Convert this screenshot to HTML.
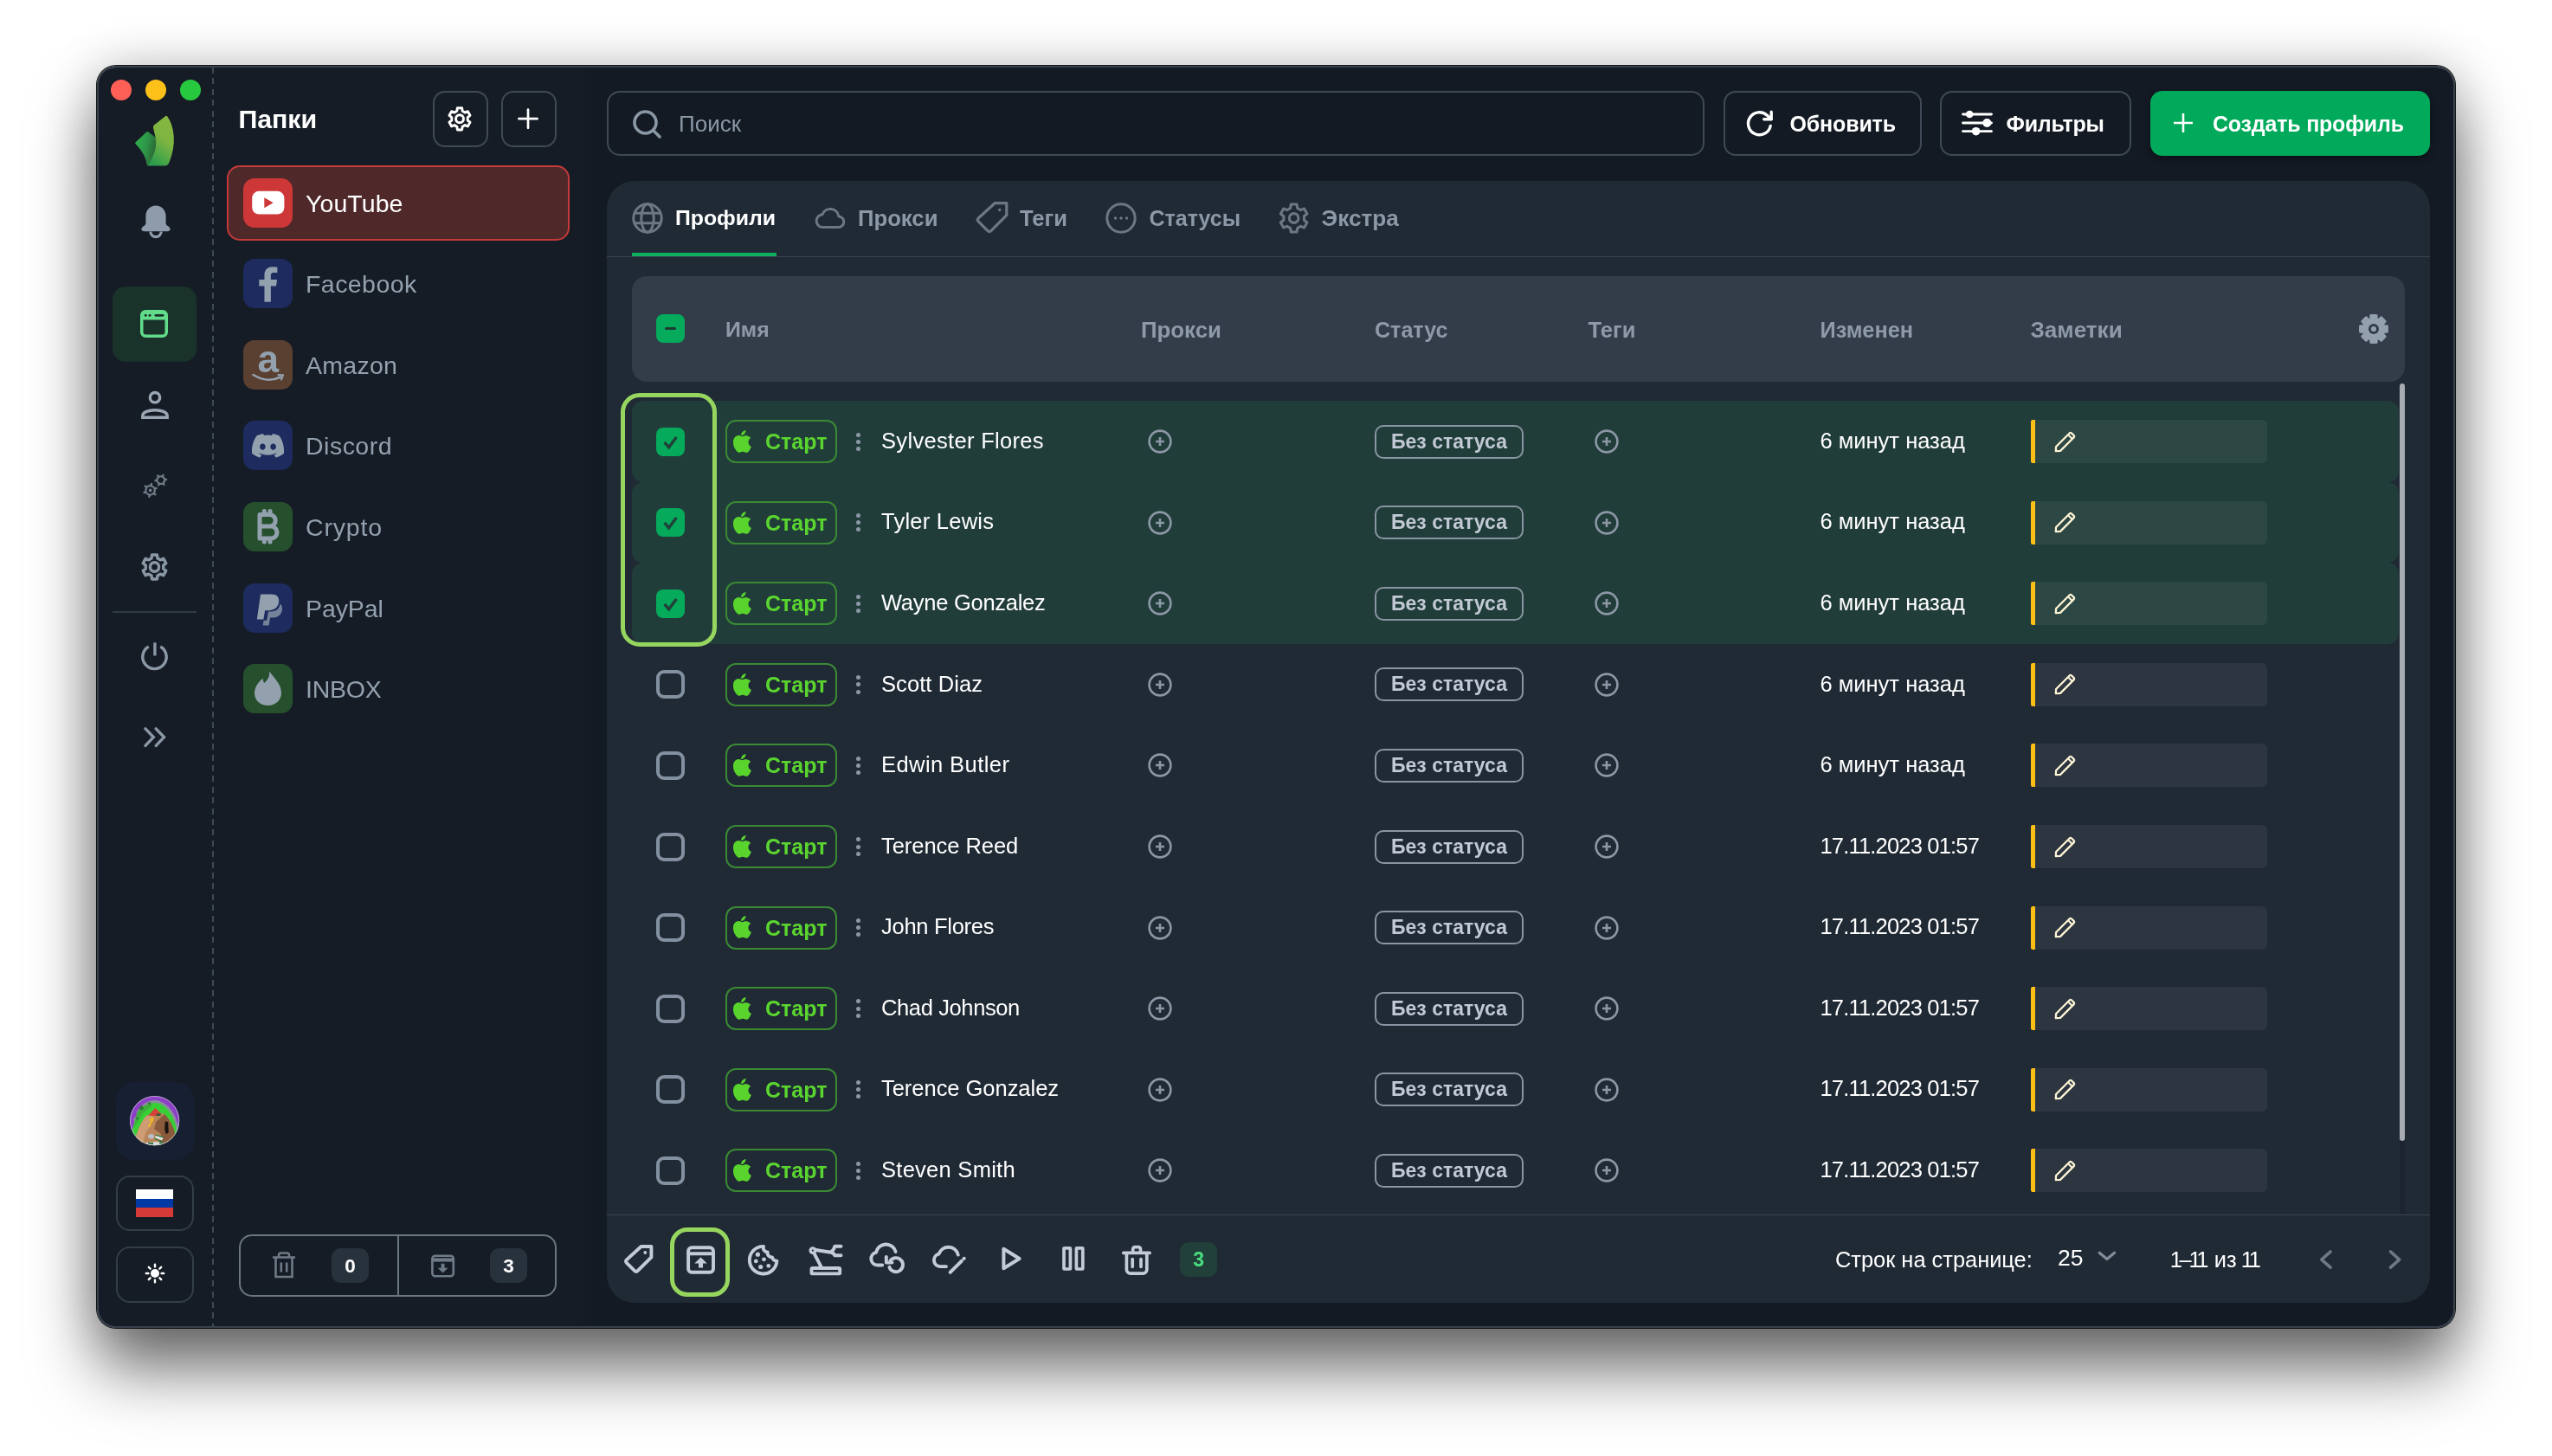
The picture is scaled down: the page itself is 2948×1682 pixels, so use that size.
<!DOCTYPE html>
<html lang="ru"><head><meta charset="utf-8"><title>Профили</title><style>
*{box-sizing:border-box;margin:0;padding:0}
html,body{width:2948px;height:1682px;background:#fff;overflow:hidden}
body{position:relative;font-family:"Liberation Sans",sans-serif;color:#fff;-webkit-font-smoothing:antialiased}
.win{position:absolute;left:112px;top:76px;width:2724px;height:1458px;border-radius:22px;background:linear-gradient(90deg,#161c26 0,#161c26 556px,#131a23 572px);overflow:hidden;
 box-shadow:0 0 0 1px rgba(0,0,0,.9),0 48px 76px rgba(0,0,0,.56),0 0 60px rgba(0,0,0,.2)}
.win:after{content:"";position:absolute;inset:0;border-radius:22px;box-shadow:inset 0 0 0 2px #37414d,inset 0 2px 0 0 #55616e;pointer-events:none;z-index:50}
.pg{will-change:transform;position:absolute;left:-112px;top:-76px;width:2948px;height:1682px}
.a{position:absolute}
.c{display:flex;align-items:center;justify-content:center}
svg{display:block;overflow:visible}
.tl{width:24px;height:24px;border-radius:50%;top:92px}
.dash{left:245px;top:76px;width:0;height:1458px;border-left:2px dashed #3d4754}
.navact{left:130px;top:331px;width:97px;height:87px;border-radius:15px;background:#19332b}
.sbbtn{left:134px;width:90px;border-radius:16px;border:2px solid #333d49}
.title{left:275.500px;top:119.300px;font-size:30.400px;font-weight:700;line-height:36px;letter-spacing:-.1px}
.sq{width:64.200px;height:64.500px;top:105.300px;border-radius:14px;border:2px solid #3f4955}
.fold{left:262.500px;width:395.500px;height:86px;border-radius:15px}
.fold .ic{position:absolute;left:18px;top:14px;width:57px;height:57px;border-radius:13px}
.fold .nm{position:absolute;left:90.500px;top:.2px;height:86px;line-height:86px;font-size:28.500px;color:#93a0ae}
.fold.act{background:#4f282a;border:2px solid #c43a3a;left:262px;width:396.300px;height:87px;margin-top:-.5px}
.fold.act .nm{color:#fff;left:89px;top:-1.300px}
.fold.act .ic{left:16.500px;top:12.500px}
.cnt{left:276px;top:1426px;width:367px;height:72px;border-radius:15px;border:2px solid #6a7682}
.cbadge{width:43px;height:40px;border-radius:11px;background:#28323d;top:1442px;font-weight:700;font-size:22.500px;padding-top:1px;color:#fff}
.search{left:701px;top:104.500px;width:1268px;height:75px;border-radius:15px;border:2px solid #3f4955}
.btn{top:105px;height:74.500px;border-radius:14px;border:2px solid #3f4955;font-weight:700;font-size:25px}
.panel{left:701px;top:209px;width:2106px;height:1296px;border-radius:32px;background:#202a35}
.tab{top:232px;height:40px;line-height:40px;font-weight:700;font-size:25.4px;color:#8b98a6}
.thead{left:730px;top:319px;width:2048px;height:122px;border-radius:17px;background:#323d49}
.th{top:361.300px;height:40px;line-height:40px;font-weight:700;font-size:24.6px;color:#8e9aa8}
.row{left:730px;width:2041px;height:93.570px;border-radius:13px}
.row.sel{background:#213d3a}
.cb{width:33px;height:33px;border-radius:8px}
.cb.on{background:#05aa5b}
.cb.off{border:4px solid #8290a0;border-radius:9px}
.start{width:129px;height:50px;border-radius:12px;border:2px solid #3a8a34;color:#5ad52f;font-weight:700;font-size:25px}
.nm2{font-size:26px;color:#fff;height:40px;line-height:40px;white-space:nowrap}
.st{width:172px;height:39px;border-radius:10px;border:2px solid #8995a2;color:#c0c9d4;font-weight:700;font-size:23px;line-height:35px;text-align:center}
.note{width:273px;height:50px;background:rgba(255,255,255,.055);border-left:5.300px solid #fbbf16;border-radius:2px 6px 6px 2px}
.bbar{left:701px;top:1402.500px;width:2106px;height:1.800px;background:#3a4551}
.ft{font-size:25.4px;color:#fff;height:40px;line-height:40px;white-space:nowrap}
.hl{border:5px solid #96d65f;border-radius:22px}
</style></head>
<body>
<div class="win"><div class="pg">
<div class="a tl" style="left:128px;background:#fe5f57"></div>
<div class="a tl" style="left:168px;background:#fec119"></div>
<div class="a tl" style="left:208px;background:#27c93f"></div>
<svg class="a" style="left:150px;top:128px" width="60" height="70" viewBox="150 128 60 70" ><defs><linearGradient id="lg1" x1=".75" y1="0" x2=".3" y2="1"><stop offset="0" stop-color="#88b840"/><stop offset=".45" stop-color="#7db442"/><stop offset=".75" stop-color="#4fa848"/><stop offset="1" stop-color="#2a9a4c"/></linearGradient>
<linearGradient id="lg2" x1="0" y1=".3" x2="1" y2=".6"><stop offset="0" stop-color="#2fb04e"/><stop offset=".5" stop-color="#2e9448"/><stop offset="1" stop-color="#2a5a2f"/></linearGradient></defs>
<path d="M169.200 152.600Q170.200 151.600 171.400 152.500L182 160.500 181 176 170 191.600Q168.500 178 156.600 166.200 155.700 165.200 156.700 164.200Z" fill="url(#lg2)"/>
<path d="M191 134.200Q192.300 133.200 193.300 134.600 199.500 143 200.700 157 201.800 172 195.500 187.500 193.800 191.600 190.500 191.600L170.200 191.600Q176.500 182 179 173.900 181.600 164 178.500 153.900L177 147.500Q176.500 145.600 178 144.400Z" fill="url(#lg1)"/></svg>
<svg class="a" style="left:162px;top:236px" width="36" height="40" viewBox="0 0 36 40" ><path d="M18 1.5c-6.6 0-11.6 5.2-11.6 11.8v8.2c0 1.6-.7 2.6-2 3.4C2.6 26 1.4 27 1.4 28.6c0 1.7 1.4 2.7 3.2 2.7h26.8c1.8 0 3.2-1 3.2-2.7 0-1.600-1.2-2.6-3-3.700-1.300-.8-2-1.800-2-3.400v-8.200C29.600 6.700 24.600 1.500 18 1.500Z" fill="#8e9baa"/><path d="M11.800 31.5a6.200 6.200 0 0 0 12.400 0" fill="none" stroke="#8e9baa" stroke-width="3.200"/></svg>
<div class="a navact"></div>
<svg class="a" style="left:162px;top:358px" width="32" height="32" viewBox="0 0 32 32" ><rect x="1.75" y="1.75" width="28.5" height="28.5" rx="4.500" fill="none" stroke="#62dc8a" stroke-width="3.500"/><path d="M2 6a4 4 0 0 1 4-4h20a4 4 0 0 1 4 4v5.500H2Z" fill="#62dc8a"/><circle cx="6.300" cy="6.300" r="1.500" fill="#19332b"/><circle cx="11" cy="6.300" r="1.500" fill="#19332b"/><rect x="16.500" y="4.900" width="11" height="2.800" rx="1.400" fill="#19332b"/></svg>
<svg class="a" style="left:162px;top:451px" width="34" height="34" viewBox="0 0 34 34" ><circle cx="17" cy="8.200" r="5.700" fill="none" stroke="#9aa6b3" stroke-width="3.400"/><path d="M2.800 31.300v-2c0-4.300 7-6.500 14.200-6.500s14.200 2.200 14.200 6.500v2Z" fill="none" stroke="#9aa6b3" stroke-width="3.400" stroke-linejoin="miter"/></svg>
<svg class="a" style="left:160px;top:544px" width="40" height="40" viewBox="160 544 40 40" ><g fill="none" stroke="#717c89" stroke-width="2.300"><g transform="translate(173.600 566.400) rotate(10)"><circle r="5.2"/><path d="M0 -5.2V-8.5" transform="rotate(0)"/><path d="M0 -5.2V-8.5" transform="rotate(60)"/><path d="M0 -5.2V-8.5" transform="rotate(120)"/><path d="M0 -5.2V-8.5" transform="rotate(180)"/><path d="M0 -5.2V-8.5" transform="rotate(240)"/><path d="M0 -5.2V-8.5" transform="rotate(300)"/><circle r=".8" fill="#717c89"/></g><g transform="translate(185.800 554.600) rotate(25)"><circle r="4.3"/><path d="M0 -4.3V-7.3" transform="rotate(0)"/><path d="M0 -4.3V-7.3" transform="rotate(60)"/><path d="M0 -4.3V-7.3" transform="rotate(120)"/><path d="M0 -4.3V-7.3" transform="rotate(180)"/><path d="M0 -4.3V-7.3" transform="rotate(240)"/><path d="M0 -4.3V-7.3" transform="rotate(300)"/></g></g></svg>
<svg class="a" style="left:163.4px;top:638.8px" width="31" height="32" viewBox="0 0 100 100" preserveAspectRatio="none"><path d="M38.65 18.48 L40.64 5.98 L59.36 5.98 L61.35 18.48 L71.62 24.41 L83.44 19.89 L92.80 36.09 L82.97 44.07 L82.97 55.93 L92.80 63.91 L83.44 80.11 L71.62 75.59 L61.35 81.52 L59.36 94.02 L40.64 94.02 L38.65 81.52 L28.38 75.59 L16.56 80.11 L7.20 63.91 L17.03 55.93 L17.03 44.07 L7.20 36.09 L16.56 19.89 L28.38 24.41Z" fill="none" stroke="#8a97a5" stroke-width="11" stroke-linejoin="round"/><circle cx="50" cy="50" r="16.5" fill="none" stroke="#8a97a5" stroke-width="11"/></svg>
<div class="a" style="left:130px;top:706px;width:97px;height:2px;background:#2f3a46"></div>
<svg class="a" style="left:162px;top:741px" width="33" height="34" viewBox="0 0 33 34" ><path d="M9.700 6a13.700 13.700 0 1 0 13.600 0" fill="none" stroke="#8a97a5" stroke-width="3.400" stroke-linecap="butt"/><path d="M16.900 1.300v15.200" stroke="#8a97a5" stroke-width="3.400"/></svg>
<svg class="a" style="left:164px;top:838px" width="28" height="28" viewBox="164 838 28 28" ><path d="M168 841.800L177.300 851.600 168 861.400M180.200 841.800L189.500 851.600 180.200 861.400" fill="none" stroke="#8a97a5" stroke-width="3.400" stroke-linejoin="miter" stroke-linecap="round"/></svg>
<div class="a" style="left:134px;top:1249.800px;width:90px;height:90.300px;border-radius:21px;background:#172033"></div>
<svg class="a" style="left:149.8px;top:1266px" width="57.3" height="57.3" viewBox="0 0 57 57" ><defs><clipPath id="avc"><circle cx="28.500" cy="28.500" r="28.500"/></clipPath></defs>
<g clip-path="url(#avc)"><rect width="57" height="57" fill="#8d3fc6"/>
<ellipse cx="28.400" cy="50" rx="29" ry="45" fill="#8a909b"/>
<path d="M0 18l7-3 1 8-4 3 2 6-4 8-2 1Z" fill="#8d3fc6"/>
<ellipse cx="28.400" cy="50" rx="26.300" ry="42" fill="#37cf36"/>
<path d="M8 20Q14 10 26 8.500L24 13 15 20 9 30 5 36Z" fill="#3fae3a"/>
<path d="M10 14l4-3 2 3-3 3ZM20 8l4-1-1 4ZM6 26l3-2 1 4Z" fill="#2b7a33"/>
<path d="M6 50Q10 34 18.700 23L22 21.500 36 20 40 21Q50 32 52.500 46L50 57 8 57Z" fill="#b9855a"/>
<path d="M18.700 23L26 22.500 24 34 18 42 15 57 8 57 6 50Q10 34 18.700 23Z" fill="#cf9d73"/>
<path d="M30 30L40 21Q50 32 52.500 46L50 57 33 57 36 44 28 38Z" fill="#8a5a3c"/>
<path d="M40.500 29l3.500 1 .5 12-3 2-1.500-6Z" fill="#1a1410"/>
<path d="M21.400 22.700L29.100 14 35.900 20.400 31 21 30.500 23Z" fill="#d9403a"/>
<path d="M30.500 20.300h5v2.500h-5Z" fill="#2d5a3a"/>
<path d="M22.300 27l4.800-3.200.5 2.800-2 4.600-3.300 1.300 2-3.500Z" fill="#f2b71e"/>
<path d="M21.500 33l3-1.500-1 4-2 .5Z" fill="#f2b71e"/>
<ellipse cx="24.500" cy="46.500" rx="3.600" ry="2.800" fill="#b9bdc6"/>
<path d="M30 45l8.500 2.500-1.500 3.800-8-3.300Z" fill="#dfe3e6"/><path d="M29.500 44.300l9.500 2.700-.4 1.200-9.400-2.800ZM28.500 48.500l8.500 3.500-.6 1.200-8.400-3.600Z" fill="#2e7a3a"/>
<path d="M18 54Q28 51.500 40 54L40 57 18 57Z" fill="#d9dadd"/><path d="M21 53.500h6v2h-6ZM34 53.200h5v2h-5Z" fill="#2e6a34"/>
</g><circle cx="28.500" cy="28.500" r="28" fill="none" stroke="#c9cdd3" stroke-width=".9" opacity=".8"/></svg>
<div class="a sbbtn" style="top:1358px;height:63.500px"></div>
<div class="a" style="left:157px;top:1373.800px;width:43px;height:32px;background:linear-gradient(#fff 0,#fff 33.300%,#0039a6 33.300%,#0039a6 66.600%,#d63a36 66.600%)"></div>
<div class="a sbbtn" style="top:1440px;height:64.500px"></div>
<svg class="a" style="left:166.8px;top:1459.4px" width="24" height="24" viewBox="-12 -12 24 24" ><circle r="5" fill="#fff"/><path d="M0 -7.600V-10.200" transform="rotate(0)" stroke="#fff" stroke-width="2.400" stroke-linecap="round"/><path d="M0 -7.600V-10.200" transform="rotate(45)" stroke="#fff" stroke-width="2.400" stroke-linecap="round"/><path d="M0 -7.600V-10.200" transform="rotate(90)" stroke="#fff" stroke-width="2.400" stroke-linecap="round"/><path d="M0 -7.600V-10.200" transform="rotate(135)" stroke="#fff" stroke-width="2.400" stroke-linecap="round"/><path d="M0 -7.600V-10.200" transform="rotate(180)" stroke="#fff" stroke-width="2.400" stroke-linecap="round"/><path d="M0 -7.600V-10.200" transform="rotate(225)" stroke="#fff" stroke-width="2.400" stroke-linecap="round"/><path d="M0 -7.600V-10.200" transform="rotate(270)" stroke="#fff" stroke-width="2.400" stroke-linecap="round"/><path d="M0 -7.600V-10.200" transform="rotate(315)" stroke="#fff" stroke-width="2.400" stroke-linecap="round"/></svg>
<div class="a" style="left:244.800px;top:76px;width:2px;height:1458px;background:repeating-linear-gradient(180deg,#3f4956 0,#3f4956 7px,transparent 7px,transparent 12.400px);background-position:0 2px"></div>
<div class="a title">Папки</div>
<div class="a sq" style="left:499.500px"></div><div class="a sq" style="left:578.500px"></div>
<svg class="a" style="left:517px;top:122.6px" width="28" height="28.6" viewBox="0 0 100 100" preserveAspectRatio="none"><path d="M38.65 18.48 L40.64 5.98 L59.36 5.98 L61.35 18.48 L71.62 24.41 L83.44 19.89 L92.80 36.09 L82.97 44.07 L82.97 55.93 L92.80 63.91 L83.44 80.11 L71.62 75.59 L61.35 81.52 L59.36 94.02 L40.64 94.02 L38.65 81.52 L28.38 75.59 L16.56 80.11 L7.20 63.91 L17.03 55.93 L17.03 44.07 L7.20 36.09 L16.56 19.89 L28.38 24.41Z" fill="none" stroke="#fff" stroke-width="10.5" stroke-linejoin="round"/><circle cx="50" cy="50" r="16" fill="none" stroke="#fff" stroke-width="10.5"/></svg>
<svg class="a" style="left:598px;top:125px" width="24" height="24" viewBox="598 125 24 24" ><path d="M610 126.600v21.200M599.400 137.200h21.200" stroke="#fff" stroke-width="2.700" stroke-linecap="round"/></svg>
<div class="a fold act" style="top:191.5px"><div class="ic" style="background:#cd3737"><svg width="57" height="57" viewBox="0 0 57 57"><path d="M6.500 17.500h44v22h-44z" fill="none"/><rect x="10.200" y="14.800" width="37.200" height="26.800" rx="8" fill="#fff"/><path d="M24.300 22.200l10.400 6-10.400 6Z" fill="#cd3737"/></svg></div><div class="nm" style="letter-spacing:0.07px">YouTube</div></div>
<div class="a fold" style="top:285.1px"><div class="ic" style="background:#1d2b5e"><svg width="57" height="57" viewBox="0 0 57 57"><path transform="translate(28.500 29.500) scale(1.120) translate(-28.500 -30)" d="M31.500 48V31.800h5.500l.9-6.600h-6.400v-4c0-1.900.6-3.200 3.300-3.200h3.400v-5.800c-.6-.1-2.600-.3-5-.3-5 0-8.300 3-8.300 8.500v4.800h-5.500v6.600h5.500V48Z" fill="#93a0ae"/></svg></div><div class="nm" style="letter-spacing:0.44px">Facebook</div></div>
<div class="a fold" style="top:378.7px"><div class="ic" style="background:#5a4030"><svg width="57" height="57" viewBox="0 0 57 57"><text x="28.700" y="36.700" font-family="Liberation Sans,sans-serif" font-weight="700" font-size="44" text-anchor="middle" fill="#93a0ae">a</text><path d="M11.500 40Q28 50 43 42.500" fill="none" stroke="#93a0ae" stroke-width="2.600" stroke-linecap="round"/><path d="M40.500 40l5.500.4-2 5" fill="none" stroke="#93a0ae" stroke-width="2.200" stroke-linecap="round" stroke-linejoin="round"/></svg></div><div class="nm" style="letter-spacing:0.28px">Amazon</div></div>
<div class="a fold" style="top:472.3px"><div class="ic" style="background:#1d2b5e"><svg width="57" height="57" viewBox="0 0 57 57"><path d="M41.500 17.200a30 30 0 0 0-7.500-2.300l-1 2a28 28 0 0 0-9 0l-1-2a30 30 0 0 0-7.500 2.300C10.800 24.300 9.500 31.200 10.100 38a30 30 0 0 0 9.200 4.700l2-3.200a19 19 0 0 1-3.100-1.500l.8-.6a21.500 21.500 0 0 0 19 0l.8.600a19 19 0 0 1-3.100 1.500l2 3.200a30 30 0 0 0 9.200-4.700c.7-7.900-1.200-14.700-5.400-20.800ZM22.400 33.800c-1.800 0-3.300-1.700-3.300-3.700s1.400-3.700 3.300-3.700 3.400 1.700 3.300 3.700c0 2-1.500 3.700-3.300 3.700Zm12.200 0c-1.800 0-3.300-1.700-3.300-3.700s1.400-3.700 3.300-3.700 3.400 1.700 3.300 3.700c0 2-1.400 3.700-3.300 3.700Z" fill="#93a0ae"/></svg></div><div class="nm" style="letter-spacing:0.49px">Discord</div></div>
<div class="a fold" style="top:565.9px"><div class="ic" style="background:#26502d"><svg width="57" height="57" viewBox="0 0 57 57"><path d="M19 14.500v27.500M19 14.500h11.500a6.500 6.500 0 0 1 0 13.500H19M19 28h13a7 7 0 0 1 0 14H19M24.300 10.500v4M31 10.500v4M24.300 42v4M31 42v4" fill="none" stroke="#93a0ae" stroke-width="5" stroke-linejoin="round" stroke-linecap="round"/></svg></div><div class="nm" style="letter-spacing:0.81px">Crypto</div></div>
<div class="a fold" style="top:659.5px"><div class="ic" style="background:#1d2b5e"><svg width="57" height="57" viewBox="0 0 57 57"><path d="M20 12.500h12.500c6 0 9.500 3.300 8.600 9-1 6.500-5.600 9.700-11.800 9.700h-4.200l-1.700 10.300h-7.600Z" fill="#93a0ae"/><path d="M42.600 23.500c2.200 1.700 2.800 4.300 2.300 7.300-1 6-5.200 8.700-10.800 8.700h-3l-1.500 9h-7l1-5.800h3.600l1.700-10.300h3.400c5.700 0 9.300-3 10.300-8.900Z" fill="#93a0ae" opacity=".75"/></svg></div><div class="nm" style="letter-spacing:-0.1px">PayPal</div></div>
<div class="a fold" style="top:753.1px"><div class="ic" style="background:#26502d"><svg width="57" height="57" viewBox="0 0 57 57"><path d="M30 8.500c1 7-2.800 10.600-5.800 13.600-1-1.800-1.500-3.600-1.400-5.400C16.500 21.500 13 27.500 13 33.800c0 8.300 6.800 14.200 15.500 14.200S44 42 44 33.800C44 23 35.500 16 30 8.500Z" fill="#93a0ae"/></svg></div><div class="nm" style="letter-spacing:-0.26px">INBOX</div></div>
<div class="a cnt"></div><div class="a" style="left:459px;top:1427px;width:2px;height:70px;background:#6a7682"></div>
<svg class="a" style="left:314px;top:1446px" width="28" height="32" viewBox="0 0 28 32" ><path d="M1 6.500h26M4.500 6.500v22.500h19V6.500M8 6.500V4a2.500 2.500 0 0 1 2.500-2.500h7A2.500 2.500 0 0 1 20 4v2.500M10.800 12.500v11M17.200 12.500v11" fill="none" stroke="#6e7a87" stroke-width="2.600"/></svg>
<div class="a c cbadge" style="left:383px">0</div>
<svg class="a" style="left:498.3px;top:1448.5px" width="27.2" height="27" viewBox="0 0 29 28" ><rect x="1.500" y="1.500" width="26" height="25" rx="3.500" fill="none" stroke="#6e7a87" stroke-width="2.800"/><path d="M1.500 6.500h26" stroke="#6e7a87" stroke-width="4.500"/><path d="M12.400 11h4.200v5.500h4.200l-6.300 6-6.300-6h4.200Z" fill="#6e7a87"/></svg>
<div class="a c cbadge" style="left:566px">3</div>
<div class="a search"></div>
<svg class="a" style="left:729px;top:125px" width="36" height="36" viewBox="0 0 36 36" ><circle cx="16.500" cy="16.500" r="12.500" fill="none" stroke="#8a97a5" stroke-width="3.600"/><path d="M25.500 25.500L33 33" stroke="#8a97a5" stroke-width="3.600" stroke-linecap="round"/></svg>
<div class="a" style="left:784px;top:123px;height:40px;line-height:40px;font-size:26px;color:#8a97a5">Поиск</div>
<div class="a btn" style="left:1991px;width:229px"></div>
<svg class="a" style="left:2016px;top:125.5px" width="33" height="33" viewBox="0 0 33 33" ><path d="M29.200 19.500A13 13 0 1 1 25.300 7.200L30 11.500" fill="none" stroke="#fff" stroke-width="3.400" stroke-linecap="round" stroke-linejoin="round"/><path d="M30.200 3.200v8.500h-8.500" fill="none" stroke="#fff" stroke-width="3.400" stroke-linecap="round" stroke-linejoin="round"/></svg>
<div class="a btn" style="border:0;left:2067.500px;line-height:76px;letter-spacing:-.15px">Обновить</div>
<div class="a btn" style="left:2241px;width:221px"></div>
<svg class="a" style="left:2266px;top:124px" width="36" height="36" viewBox="0 0 36 36" ><path d="M1.500 8h33M1.500 18h33M1.500 27.700h33" stroke="#fff" stroke-width="2.800" stroke-linecap="round"/><circle cx="9.200" cy="8" r="4.300" fill="#fff"/><circle cx="29.300" cy="18" r="5" fill="#fff"/><circle cx="16.600" cy="27.700" r="4.800" fill="#fff"/></svg>
<div class="a btn" style="border:0;left:2317.500px;line-height:76px;letter-spacing:-.2px">Фильтры</div>
<div class="a btn" style="left:2484px;width:323px;border:0;background:#01a95b;box-shadow:0 3px 8px rgba(0,0,0,.35)"></div>
<svg class="a" style="left:2510px;top:130px" width="24" height="24" viewBox="0 0 24 24" ><path d="M12 1v22M1 12h22" stroke="#fff" stroke-width="2.600" stroke-linecap="butt"/></svg>
<div class="a btn" style="border:0;left:2556px;line-height:76px;letter-spacing:-.2px">Создать профиль</div>
<div class="a panel"></div>
<svg class="a" style="left:730px;top:234px" width="36" height="36" viewBox="0 0 36 36" ><g fill="none" stroke="#6c7784" stroke-width="3"><circle cx="18" cy="18" r="16.200"/><ellipse cx="18" cy="18" rx="7.200" ry="16.200"/><path d="M2.800 12.300h30.400M2.800 23.700h30.400"/></g></svg>
<div class="a tab" style="left:780px;color:#fff;font-size:24.800px">Профили</div>
<div class="a" style="left:730px;top:292px;width:167px;height:4px;background:#0fb15d"></div>
<div class="a" style="left:701px;top:295.500px;width:2106px;height:1.500px;background:#39434f"></div>
<div class="a" style="left:730px;top:292px;width:167px;height:4px;background:#0fb15d"></div>
<svg class="a" style="left:940px;top:238px" width="36" height="28" viewBox="0 0 36 28" ><path d="M9.500 24.500h18.800a6.200 6.200 0 0 0 .6-12.400A9.800 9.800 0 0 0 10 9.800 7.400 7.400 0 0 0 9.500 24.500Z" fill="none" stroke="#6c7784" stroke-width="3" stroke-linejoin="round"/></svg>
<div class="a tab" style="left:991px;font-size:25.700px">Прокси</div>
<svg class="a" style="left:1124.2px;top:230px" width="43" height="43" viewBox="718.300 1436 37.800 37.800" ><path d="M740.600 1440H752.400V1452.400L736.600 1468.200Q734.900 1469.900 733.200 1468.200L723.800 1458.800Q722.100 1457.100 723.800 1455.400Z" fill="none" stroke="#6c7784" stroke-width="2.850" stroke-linejoin="round"/><circle cx="745.300" cy="1447" r="1.500" fill="#6c7784"/></svg>
<div class="a tab" style="left:1178px;font-size:25.600px">Теги</div>
<svg class="a" style="left:1277px;top:234px" width="36" height="36" viewBox="0 0 36 36" ><circle cx="18" cy="18" r="16.200" fill="none" stroke="#6c7784" stroke-width="3"/><circle cx="11.500" cy="18" r="1.700" fill="#6c7784"/><circle cx="18" cy="18" r="1.700" fill="#6c7784"/><circle cx="24.500" cy="18" r="1.700" fill="#6c7784"/></svg>
<div class="a tab" style="left:1327.500px;font-size:25px">Статусы</div>
<svg class="a" style="left:1477.3px;top:234px" width="35.3" height="36" viewBox="0 0 100 100" preserveAspectRatio="none"><path d="M38.48 18.01 L40.54 5.49 L59.46 5.49 L61.52 18.01 L71.95 24.03 L83.81 19.55 L93.27 35.94 L83.46 43.98 L83.46 56.02 L93.27 64.06 L83.81 80.45 L71.95 75.97 L61.52 81.99 L59.46 94.51 L40.54 94.51 L38.48 81.99 L28.05 75.97 L16.19 80.45 L6.73 64.06 L16.54 56.02 L16.54 43.98 L6.73 35.94 L16.19 19.55 L28.05 24.03Z" fill="none" stroke="#6c7784" stroke-width="8.7" stroke-linejoin="round"/><circle cx="50" cy="50" r="15" fill="none" stroke="#6c7784" stroke-width="8.7"/></svg>
<div class="a tab" style="left:1526.500px;font-size:26.200px">Экстра</div>
<div class="a thead"></div>
<div class="a cb on c" style="left:758px;top:363px"><div style="width:13px;height:3.500px;border-radius:2px;background:#1c3b33"></div></div>
<div class="a th" style="left:838px;font-size:24.8px">Имя</div>
<div class="a th" style="left:1318px;font-size:25.8px">Прокси</div>
<div class="a th" style="left:1588px;font-size:25.1px">Статус</div>
<div class="a th" style="left:1834.5px;font-size:25.6px">Теги</div>
<div class="a th" style="left:2102.5px;font-size:25.3px">Изменен</div>
<div class="a th" style="left:2345.5px;font-size:26.1px">Заметки</div>
<svg class="a" style="left:2724px;top:361.8px" width="36" height="36" viewBox="0 0 100 100" ><path d="M82.45 41.67 L92.66 41.51 L92.66 58.49 L82.45 58.33 L78.83 67.05 L86.17 74.17 L74.17 86.17 L67.05 78.83 L58.33 82.45 L58.49 92.66 L41.51 92.66 L41.67 82.45 L32.95 78.83 L25.83 86.17 L13.83 74.17 L21.17 67.05 L17.55 58.33 L7.34 58.49 L7.34 41.51 L17.55 41.67 L21.17 32.95 L13.83 25.83 L25.83 13.83 L32.95 21.17 L41.67 17.55 L41.51 7.34 L58.49 7.34 L58.33 17.55 L67.05 21.17 L74.17 13.83 L86.17 25.83 L78.83 32.95Z" fill="#93a0ad" stroke="#93a0ad" stroke-width="9" stroke-linejoin="round"/><circle cx="50" cy="50" r="16.700" fill="#323d49"/><circle cx="50" cy="50" r="8.600" fill="#93a0ad"/></svg>
<div class="a row sel" style="top:463.20px"></div>
<div class="a cb on" style="left:758px;top:493.70px"><svg width="33" height="33" viewBox="0 0 33 33"><path d="M9.600 16.800l5 6 8.800-11.800" fill="none" stroke="#204038" stroke-width="3.400" stroke-linejoin="miter"/></svg></div>
<div class="a start" style="left:838px;top:485.20px"><svg class="a" style="left:5.600px;top:9.800px" width="22" height="25.800" viewBox="0 0 23 27" fill="#58d42d"><path d="M16.600 6.300c-2.100.100-3.700 1.300-4.700 1.300S9.300 6.400 7.600 6.400C4.400 6.500 1 9.200 1 14.600c0 3.300 1.300 6.800 2.900 9 1.300 1.900 2.500 3.400 4.200 3.400s2.400-1.100 4.500-1.100 2.500 1.100 4.300 1.100 3-1.700 4.100-3.300c1.300-1.900 1.800-3.700 1.900-3.800-.100 0-3.600-1.400-3.600-5.400 0-3.400 2.700-4.900 2.900-5-1.600-2.300-4-2.600-4.800-2.600ZM14.700 4.200C15.700 3 16.400 1.400 16.200 0c-1.400.100-3.100 1-4.100 2.200-.900 1-1.700 2.600-1.500 4.100 1.600.100 3.200-.800 4.100-2.100Z"/></svg><div class="a" style="left:44px;top:0;line-height:47px">Старт</div></div>
<div class="a" style="left:989.200px;top:499.50px;width:5px;height:5px;border-radius:50%;background:#8b98a6"></div>
<div class="a" style="left:989.200px;top:507.70px;width:5px;height:5px;border-radius:50%;background:#8b98a6"></div>
<div class="a" style="left:989.200px;top:515.80px;width:5px;height:5px;border-radius:50%;background:#8b98a6"></div>
<div class="a nm2" style="left:1018px;top:488.90px;font-size:25.500px;letter-spacing:0.32px">Sylvester Flores</div>
<svg class="a" style="left:1325.8px;top:496.2px" width="28" height="28" viewBox="0 0 28 28" ><circle cx="14" cy="14" r="12.400" fill="none" stroke="#8b97a5" stroke-width="2.600"/><path d="M14 9v10M9 14h10" stroke="#8b97a5" stroke-width="2.600"/></svg>
<div class="a st" style="left:1588px;top:490.70px">Без статуса</div>
<svg class="a" style="left:1841.6px;top:496.2px" width="28" height="28" viewBox="0 0 28 28" ><circle cx="14" cy="14" r="12.400" fill="none" stroke="#8b97a5" stroke-width="2.600"/><path d="M14 9v10M9 14h10" stroke="#8b97a5" stroke-width="2.600"/></svg>
<div class="a nm2" style="left:2102.500px;top:488.90px;font-size:25.500px;letter-spacing:0">6 минут назад</div>
<div class="a note" style="left:2346px;top:485.20px"></div>
<svg class="a" style="left:2371.5px;top:496.7px" width="27" height="27" viewBox="0 0 27 27" ><path d="M2.800 24.200l.3-5.200L18.600 3.500a1.800 1.800 0 0 1 2.500 0l2.400 2.400a1.800 1.800 0 0 1 0 2.500L8 23.900Z" fill="none" stroke="#fdf4d5" stroke-width="2.300" stroke-linejoin="round"/><path d="M17 5.200l4.800 4.800" stroke="#fdf4d5" stroke-width="2.100"/></svg>
<div class="a row sel" style="top:556.77px"></div>
<div class="a cb on" style="left:758px;top:587.27px"><svg width="33" height="33" viewBox="0 0 33 33"><path d="M9.600 16.800l5 6 8.800-11.800" fill="none" stroke="#204038" stroke-width="3.400" stroke-linejoin="miter"/></svg></div>
<div class="a start" style="left:838px;top:578.77px"><svg class="a" style="left:5.600px;top:9.800px" width="22" height="25.800" viewBox="0 0 23 27" fill="#58d42d"><path d="M16.600 6.300c-2.100.100-3.700 1.300-4.700 1.300S9.300 6.400 7.600 6.400C4.400 6.500 1 9.200 1 14.600c0 3.300 1.300 6.800 2.900 9 1.300 1.900 2.500 3.400 4.200 3.400s2.400-1.100 4.500-1.100 2.500 1.100 4.300 1.100 3-1.700 4.100-3.300c1.300-1.900 1.800-3.700 1.900-3.800-.100 0-3.600-1.400-3.600-5.400 0-3.400 2.700-4.900 2.900-5-1.600-2.300-4-2.600-4.800-2.600ZM14.700 4.200C15.700 3 16.400 1.400 16.200 0c-1.400.100-3.100 1-4.100 2.200-.900 1-1.700 2.600-1.500 4.100 1.600.100 3.200-.800 4.100-2.100Z"/></svg><div class="a" style="left:44px;top:0;line-height:47px">Старт</div></div>
<div class="a" style="left:989.200px;top:593.07px;width:5px;height:5px;border-radius:50%;background:#8b98a6"></div>
<div class="a" style="left:989.200px;top:601.27px;width:5px;height:5px;border-radius:50%;background:#8b98a6"></div>
<div class="a" style="left:989.200px;top:609.37px;width:5px;height:5px;border-radius:50%;background:#8b98a6"></div>
<div class="a nm2" style="left:1018px;top:582.47px;font-size:25.500px;letter-spacing:0.243px">Tyler Lewis</div>
<svg class="a" style="left:1325.8px;top:589.77px" width="28" height="28" viewBox="0 0 28 28" ><circle cx="14" cy="14" r="12.400" fill="none" stroke="#8b97a5" stroke-width="2.600"/><path d="M14 9v10M9 14h10" stroke="#8b97a5" stroke-width="2.600"/></svg>
<div class="a st" style="left:1588px;top:584.27px">Без статуса</div>
<svg class="a" style="left:1841.6px;top:589.77px" width="28" height="28" viewBox="0 0 28 28" ><circle cx="14" cy="14" r="12.400" fill="none" stroke="#8b97a5" stroke-width="2.600"/><path d="M14 9v10M9 14h10" stroke="#8b97a5" stroke-width="2.600"/></svg>
<div class="a nm2" style="left:2102.500px;top:582.47px;font-size:25.500px;letter-spacing:0">6 минут назад</div>
<div class="a note" style="left:2346px;top:578.77px"></div>
<svg class="a" style="left:2371.5px;top:590.27px" width="27" height="27" viewBox="0 0 27 27" ><path d="M2.800 24.200l.3-5.200L18.600 3.500a1.800 1.800 0 0 1 2.500 0l2.400 2.400a1.800 1.800 0 0 1 0 2.500L8 23.900Z" fill="none" stroke="#fdf4d5" stroke-width="2.300" stroke-linejoin="round"/><path d="M17 5.200l4.800 4.800" stroke="#fdf4d5" stroke-width="2.100"/></svg>
<div class="a row sel" style="top:650.34px"></div>
<div class="a cb on" style="left:758px;top:680.84px"><svg width="33" height="33" viewBox="0 0 33 33"><path d="M9.600 16.800l5 6 8.800-11.800" fill="none" stroke="#204038" stroke-width="3.400" stroke-linejoin="miter"/></svg></div>
<div class="a start" style="left:838px;top:672.34px"><svg class="a" style="left:5.600px;top:9.800px" width="22" height="25.800" viewBox="0 0 23 27" fill="#58d42d"><path d="M16.600 6.300c-2.100.100-3.700 1.300-4.700 1.300S9.300 6.400 7.600 6.400C4.400 6.500 1 9.200 1 14.600c0 3.300 1.300 6.800 2.900 9 1.300 1.900 2.500 3.400 4.200 3.400s2.400-1.100 4.500-1.100 2.500 1.100 4.300 1.100 3-1.700 4.100-3.300c1.300-1.900 1.800-3.700 1.900-3.800-.100 0-3.600-1.400-3.600-5.400 0-3.400 2.700-4.900 2.900-5-1.600-2.300-4-2.600-4.800-2.600ZM14.700 4.200C15.700 3 16.400 1.400 16.200 0c-1.400.100-3.100 1-4.100 2.200-.900 1-1.700 2.600-1.500 4.100 1.600.100 3.200-.800 4.100-2.100Z"/></svg><div class="a" style="left:44px;top:0;line-height:47px">Старт</div></div>
<div class="a" style="left:989.200px;top:686.64px;width:5px;height:5px;border-radius:50%;background:#8b98a6"></div>
<div class="a" style="left:989.200px;top:694.84px;width:5px;height:5px;border-radius:50%;background:#8b98a6"></div>
<div class="a" style="left:989.200px;top:702.94px;width:5px;height:5px;border-radius:50%;background:#8b98a6"></div>
<div class="a nm2" style="left:1018px;top:676.04px;font-size:25.500px;letter-spacing:-0.266px">Wayne Gonzalez</div>
<svg class="a" style="left:1325.8px;top:683.34px" width="28" height="28" viewBox="0 0 28 28" ><circle cx="14" cy="14" r="12.400" fill="none" stroke="#8b97a5" stroke-width="2.600"/><path d="M14 9v10M9 14h10" stroke="#8b97a5" stroke-width="2.600"/></svg>
<div class="a st" style="left:1588px;top:677.84px">Без статуса</div>
<svg class="a" style="left:1841.6px;top:683.34px" width="28" height="28" viewBox="0 0 28 28" ><circle cx="14" cy="14" r="12.400" fill="none" stroke="#8b97a5" stroke-width="2.600"/><path d="M14 9v10M9 14h10" stroke="#8b97a5" stroke-width="2.600"/></svg>
<div class="a nm2" style="left:2102.500px;top:676.04px;font-size:25.500px;letter-spacing:0">6 минут назад</div>
<div class="a note" style="left:2346px;top:672.34px"></div>
<svg class="a" style="left:2371.5px;top:683.84px" width="27" height="27" viewBox="0 0 27 27" ><path d="M2.800 24.200l.3-5.200L18.600 3.500a1.800 1.800 0 0 1 2.500 0l2.400 2.400a1.800 1.800 0 0 1 0 2.500L8 23.900Z" fill="none" stroke="#fdf4d5" stroke-width="2.300" stroke-linejoin="round"/><path d="M17 5.200l4.800 4.800" stroke="#fdf4d5" stroke-width="2.100"/></svg>
<div class="a row" style="top:743.91px"></div>
<div class="a cb off" style="left:758px;top:774.41px"></div>
<div class="a start" style="left:838px;top:765.91px"><svg class="a" style="left:5.600px;top:9.800px" width="22" height="25.800" viewBox="0 0 23 27" fill="#58d42d"><path d="M16.600 6.300c-2.100.100-3.700 1.300-4.700 1.300S9.300 6.400 7.600 6.400C4.400 6.500 1 9.200 1 14.600c0 3.300 1.300 6.800 2.900 9 1.300 1.900 2.500 3.400 4.200 3.400s2.400-1.100 4.500-1.100 2.500 1.100 4.300 1.100 3-1.700 4.100-3.300c1.300-1.900 1.800-3.700 1.900-3.800-.100 0-3.600-1.400-3.600-5.400 0-3.400 2.700-4.900 2.900-5-1.600-2.300-4-2.600-4.800-2.600ZM14.700 4.200C15.700 3 16.400 1.400 16.200 0c-1.400.100-3.100 1-4.100 2.200-.900 1-1.700 2.600-1.500 4.100 1.600.100 3.200-.800 4.100-2.100Z"/></svg><div class="a" style="left:44px;top:0;line-height:47px">Старт</div></div>
<div class="a" style="left:989.200px;top:780.21px;width:5px;height:5px;border-radius:50%;background:#8b98a6"></div>
<div class="a" style="left:989.200px;top:788.41px;width:5px;height:5px;border-radius:50%;background:#8b98a6"></div>
<div class="a" style="left:989.200px;top:796.51px;width:5px;height:5px;border-radius:50%;background:#8b98a6"></div>
<div class="a nm2" style="left:1018px;top:769.61px;font-size:25.500px;letter-spacing:0.08px">Scott Diaz</div>
<svg class="a" style="left:1325.8px;top:776.91px" width="28" height="28" viewBox="0 0 28 28" ><circle cx="14" cy="14" r="12.400" fill="none" stroke="#8b97a5" stroke-width="2.600"/><path d="M14 9v10M9 14h10" stroke="#8b97a5" stroke-width="2.600"/></svg>
<div class="a st" style="left:1588px;top:771.41px">Без статуса</div>
<svg class="a" style="left:1841.6px;top:776.91px" width="28" height="28" viewBox="0 0 28 28" ><circle cx="14" cy="14" r="12.400" fill="none" stroke="#8b97a5" stroke-width="2.600"/><path d="M14 9v10M9 14h10" stroke="#8b97a5" stroke-width="2.600"/></svg>
<div class="a nm2" style="left:2102.500px;top:769.61px;font-size:25.500px;letter-spacing:0">6 минут назад</div>
<div class="a note" style="left:2346px;top:765.91px"></div>
<svg class="a" style="left:2371.5px;top:777.41px" width="27" height="27" viewBox="0 0 27 27" ><path d="M2.800 24.200l.3-5.200L18.600 3.500a1.800 1.800 0 0 1 2.500 0l2.400 2.400a1.800 1.800 0 0 1 0 2.500L8 23.900Z" fill="none" stroke="#fdf4d5" stroke-width="2.300" stroke-linejoin="round"/><path d="M17 5.200l4.800 4.800" stroke="#fdf4d5" stroke-width="2.100"/></svg>
<div class="a row" style="top:837.48px"></div>
<div class="a cb off" style="left:758px;top:867.98px"></div>
<div class="a start" style="left:838px;top:859.48px"><svg class="a" style="left:5.600px;top:9.800px" width="22" height="25.800" viewBox="0 0 23 27" fill="#58d42d"><path d="M16.600 6.300c-2.100.100-3.700 1.300-4.700 1.300S9.300 6.400 7.600 6.400C4.400 6.500 1 9.200 1 14.600c0 3.300 1.300 6.800 2.900 9 1.300 1.900 2.500 3.400 4.200 3.400s2.400-1.100 4.500-1.100 2.500 1.100 4.300 1.100 3-1.700 4.100-3.300c1.300-1.900 1.800-3.700 1.900-3.800-.100 0-3.600-1.400-3.600-5.400 0-3.400 2.700-4.900 2.900-5-1.600-2.300-4-2.600-4.800-2.600ZM14.700 4.200C15.700 3 16.400 1.400 16.200 0c-1.400.100-3.100 1-4.100 2.200-.900 1-1.700 2.600-1.500 4.100 1.600.100 3.200-.800 4.100-2.100Z"/></svg><div class="a" style="left:44px;top:0;line-height:47px">Старт</div></div>
<div class="a" style="left:989.200px;top:873.78px;width:5px;height:5px;border-radius:50%;background:#8b98a6"></div>
<div class="a" style="left:989.200px;top:881.98px;width:5px;height:5px;border-radius:50%;background:#8b98a6"></div>
<div class="a" style="left:989.200px;top:890.08px;width:5px;height:5px;border-radius:50%;background:#8b98a6"></div>
<div class="a nm2" style="left:1018px;top:863.18px;font-size:25.500px;letter-spacing:0.429px">Edwin Butler</div>
<svg class="a" style="left:1325.8px;top:870.48px" width="28" height="28" viewBox="0 0 28 28" ><circle cx="14" cy="14" r="12.400" fill="none" stroke="#8b97a5" stroke-width="2.600"/><path d="M14 9v10M9 14h10" stroke="#8b97a5" stroke-width="2.600"/></svg>
<div class="a st" style="left:1588px;top:864.98px">Без статуса</div>
<svg class="a" style="left:1841.6px;top:870.48px" width="28" height="28" viewBox="0 0 28 28" ><circle cx="14" cy="14" r="12.400" fill="none" stroke="#8b97a5" stroke-width="2.600"/><path d="M14 9v10M9 14h10" stroke="#8b97a5" stroke-width="2.600"/></svg>
<div class="a nm2" style="left:2102.500px;top:863.18px;font-size:25.500px;letter-spacing:0">6 минут назад</div>
<div class="a note" style="left:2346px;top:859.48px"></div>
<svg class="a" style="left:2371.5px;top:870.98px" width="27" height="27" viewBox="0 0 27 27" ><path d="M2.800 24.200l.3-5.200L18.600 3.500a1.800 1.800 0 0 1 2.500 0l2.400 2.400a1.800 1.800 0 0 1 0 2.500L8 23.900Z" fill="none" stroke="#fdf4d5" stroke-width="2.300" stroke-linejoin="round"/><path d="M17 5.200l4.800 4.800" stroke="#fdf4d5" stroke-width="2.100"/></svg>
<div class="a row" style="top:931.05px"></div>
<div class="a cb off" style="left:758px;top:961.55px"></div>
<div class="a start" style="left:838px;top:953.05px"><svg class="a" style="left:5.600px;top:9.800px" width="22" height="25.800" viewBox="0 0 23 27" fill="#58d42d"><path d="M16.600 6.300c-2.100.100-3.700 1.300-4.700 1.300S9.300 6.400 7.600 6.400C4.400 6.500 1 9.200 1 14.600c0 3.300 1.300 6.800 2.900 9 1.300 1.900 2.500 3.400 4.200 3.400s2.400-1.100 4.500-1.100 2.500 1.100 4.300 1.100 3-1.700 4.100-3.300c1.300-1.900 1.800-3.700 1.900-3.800-.100 0-3.600-1.400-3.600-5.400 0-3.400 2.700-4.900 2.900-5-1.600-2.300-4-2.600-4.800-2.600ZM14.700 4.200C15.700 3 16.400 1.400 16.200 0c-1.400.100-3.100 1-4.100 2.200-.900 1-1.700 2.600-1.500 4.100 1.600.100 3.200-.800 4.100-2.100Z"/></svg><div class="a" style="left:44px;top:0;line-height:47px">Старт</div></div>
<div class="a" style="left:989.200px;top:967.35px;width:5px;height:5px;border-radius:50%;background:#8b98a6"></div>
<div class="a" style="left:989.200px;top:975.55px;width:5px;height:5px;border-radius:50%;background:#8b98a6"></div>
<div class="a" style="left:989.200px;top:983.65px;width:5px;height:5px;border-radius:50%;background:#8b98a6"></div>
<div class="a nm2" style="left:1018px;top:956.75px;font-size:25.500px;letter-spacing:-0.046px">Terence Reed</div>
<svg class="a" style="left:1325.8px;top:964.05px" width="28" height="28" viewBox="0 0 28 28" ><circle cx="14" cy="14" r="12.400" fill="none" stroke="#8b97a5" stroke-width="2.600"/><path d="M14 9v10M9 14h10" stroke="#8b97a5" stroke-width="2.600"/></svg>
<div class="a st" style="left:1588px;top:958.55px">Без статуса</div>
<svg class="a" style="left:1841.6px;top:964.05px" width="28" height="28" viewBox="0 0 28 28" ><circle cx="14" cy="14" r="12.400" fill="none" stroke="#8b97a5" stroke-width="2.600"/><path d="M14 9v10M9 14h10" stroke="#8b97a5" stroke-width="2.600"/></svg>
<div class="a nm2" style="left:2102.500px;top:956.75px;font-size:25.500px;letter-spacing:-.82px">17.11.2023 01:57</div>
<div class="a note" style="left:2346px;top:953.05px"></div>
<svg class="a" style="left:2371.5px;top:964.55px" width="27" height="27" viewBox="0 0 27 27" ><path d="M2.800 24.200l.3-5.200L18.600 3.500a1.800 1.800 0 0 1 2.500 0l2.400 2.400a1.800 1.800 0 0 1 0 2.500L8 23.900Z" fill="none" stroke="#fdf4d5" stroke-width="2.300" stroke-linejoin="round"/><path d="M17 5.200l4.800 4.800" stroke="#fdf4d5" stroke-width="2.100"/></svg>
<div class="a row" style="top:1024.62px"></div>
<div class="a cb off" style="left:758px;top:1055.12px"></div>
<div class="a start" style="left:838px;top:1046.62px"><svg class="a" style="left:5.600px;top:9.800px" width="22" height="25.800" viewBox="0 0 23 27" fill="#58d42d"><path d="M16.600 6.300c-2.100.100-3.700 1.300-4.700 1.300S9.300 6.400 7.600 6.400C4.400 6.500 1 9.200 1 14.600c0 3.300 1.300 6.800 2.900 9 1.300 1.900 2.500 3.400 4.200 3.400s2.400-1.100 4.500-1.100 2.500 1.100 4.300 1.100 3-1.700 4.100-3.300c1.300-1.900 1.800-3.700 1.900-3.800-.100 0-3.600-1.400-3.600-5.400 0-3.400 2.700-4.900 2.900-5-1.600-2.300-4-2.600-4.800-2.600ZM14.700 4.200C15.700 3 16.400 1.400 16.200 0c-1.400.100-3.100 1-4.100 2.200-.900 1-1.700 2.600-1.500 4.100 1.600.100 3.200-.800 4.100-2.100Z"/></svg><div class="a" style="left:44px;top:0;line-height:47px">Старт</div></div>
<div class="a" style="left:989.200px;top:1060.92px;width:5px;height:5px;border-radius:50%;background:#8b98a6"></div>
<div class="a" style="left:989.200px;top:1069.12px;width:5px;height:5px;border-radius:50%;background:#8b98a6"></div>
<div class="a" style="left:989.200px;top:1077.22px;width:5px;height:5px;border-radius:50%;background:#8b98a6"></div>
<div class="a nm2" style="left:1018px;top:1050.32px;font-size:25.500px;letter-spacing:-0.274px">John Flores</div>
<svg class="a" style="left:1325.8px;top:1057.62px" width="28" height="28" viewBox="0 0 28 28" ><circle cx="14" cy="14" r="12.400" fill="none" stroke="#8b97a5" stroke-width="2.600"/><path d="M14 9v10M9 14h10" stroke="#8b97a5" stroke-width="2.600"/></svg>
<div class="a st" style="left:1588px;top:1052.12px">Без статуса</div>
<svg class="a" style="left:1841.6px;top:1057.62px" width="28" height="28" viewBox="0 0 28 28" ><circle cx="14" cy="14" r="12.400" fill="none" stroke="#8b97a5" stroke-width="2.600"/><path d="M14 9v10M9 14h10" stroke="#8b97a5" stroke-width="2.600"/></svg>
<div class="a nm2" style="left:2102.500px;top:1050.32px;font-size:25.500px;letter-spacing:-.82px">17.11.2023 01:57</div>
<div class="a note" style="left:2346px;top:1046.62px"></div>
<svg class="a" style="left:2371.5px;top:1058.12px" width="27" height="27" viewBox="0 0 27 27" ><path d="M2.800 24.200l.3-5.200L18.600 3.500a1.800 1.800 0 0 1 2.500 0l2.400 2.400a1.800 1.800 0 0 1 0 2.500L8 23.900Z" fill="none" stroke="#fdf4d5" stroke-width="2.300" stroke-linejoin="round"/><path d="M17 5.200l4.800 4.800" stroke="#fdf4d5" stroke-width="2.100"/></svg>
<div class="a row" style="top:1118.19px"></div>
<div class="a cb off" style="left:758px;top:1148.69px"></div>
<div class="a start" style="left:838px;top:1140.19px"><svg class="a" style="left:5.600px;top:9.800px" width="22" height="25.800" viewBox="0 0 23 27" fill="#58d42d"><path d="M16.600 6.300c-2.100.100-3.700 1.300-4.700 1.300S9.300 6.400 7.600 6.400C4.400 6.500 1 9.200 1 14.600c0 3.300 1.300 6.800 2.900 9 1.300 1.900 2.500 3.400 4.200 3.400s2.400-1.100 4.500-1.100 2.500 1.100 4.300 1.100 3-1.700 4.100-3.300c1.300-1.900 1.800-3.700 1.900-3.800-.100 0-3.600-1.400-3.600-5.400 0-3.400 2.700-4.900 2.900-5-1.600-2.300-4-2.600-4.800-2.600ZM14.700 4.200C15.700 3 16.400 1.400 16.200 0c-1.400.100-3.100 1-4.100 2.200-.900 1-1.700 2.600-1.500 4.100 1.600.100 3.200-.800 4.100-2.100Z"/></svg><div class="a" style="left:44px;top:0;line-height:47px">Старт</div></div>
<div class="a" style="left:989.200px;top:1154.49px;width:5px;height:5px;border-radius:50%;background:#8b98a6"></div>
<div class="a" style="left:989.200px;top:1162.69px;width:5px;height:5px;border-radius:50%;background:#8b98a6"></div>
<div class="a" style="left:989.200px;top:1170.79px;width:5px;height:5px;border-radius:50%;background:#8b98a6"></div>
<div class="a nm2" style="left:1018px;top:1143.89px;font-size:25.500px;letter-spacing:-0.379px">Chad Johnson</div>
<svg class="a" style="left:1325.8px;top:1151.19px" width="28" height="28" viewBox="0 0 28 28" ><circle cx="14" cy="14" r="12.400" fill="none" stroke="#8b97a5" stroke-width="2.600"/><path d="M14 9v10M9 14h10" stroke="#8b97a5" stroke-width="2.600"/></svg>
<div class="a st" style="left:1588px;top:1145.69px">Без статуса</div>
<svg class="a" style="left:1841.6px;top:1151.19px" width="28" height="28" viewBox="0 0 28 28" ><circle cx="14" cy="14" r="12.400" fill="none" stroke="#8b97a5" stroke-width="2.600"/><path d="M14 9v10M9 14h10" stroke="#8b97a5" stroke-width="2.600"/></svg>
<div class="a nm2" style="left:2102.500px;top:1143.89px;font-size:25.500px;letter-spacing:-.82px">17.11.2023 01:57</div>
<div class="a note" style="left:2346px;top:1140.19px"></div>
<svg class="a" style="left:2371.5px;top:1151.69px" width="27" height="27" viewBox="0 0 27 27" ><path d="M2.800 24.200l.3-5.200L18.600 3.500a1.800 1.800 0 0 1 2.500 0l2.400 2.400a1.800 1.800 0 0 1 0 2.500L8 23.900Z" fill="none" stroke="#fdf4d5" stroke-width="2.300" stroke-linejoin="round"/><path d="M17 5.200l4.800 4.800" stroke="#fdf4d5" stroke-width="2.100"/></svg>
<div class="a row" style="top:1211.76px"></div>
<div class="a cb off" style="left:758px;top:1242.26px"></div>
<div class="a start" style="left:838px;top:1233.76px"><svg class="a" style="left:5.600px;top:9.800px" width="22" height="25.800" viewBox="0 0 23 27" fill="#58d42d"><path d="M16.600 6.300c-2.100.100-3.700 1.300-4.700 1.300S9.300 6.400 7.600 6.400C4.400 6.500 1 9.200 1 14.600c0 3.300 1.300 6.800 2.900 9 1.300 1.900 2.500 3.400 4.200 3.400s2.400-1.100 4.500-1.100 2.500 1.100 4.300 1.100 3-1.700 4.100-3.300c1.300-1.900 1.800-3.700 1.900-3.800-.100 0-3.600-1.400-3.600-5.400 0-3.400 2.700-4.900 2.900-5-1.600-2.300-4-2.600-4.800-2.600ZM14.700 4.200C15.700 3 16.400 1.400 16.200 0c-1.400.100-3.100 1-4.100 2.200-.900 1-1.700 2.600-1.500 4.100 1.600.100 3.200-.800 4.100-2.100Z"/></svg><div class="a" style="left:44px;top:0;line-height:47px">Старт</div></div>
<div class="a" style="left:989.200px;top:1248.06px;width:5px;height:5px;border-radius:50%;background:#8b98a6"></div>
<div class="a" style="left:989.200px;top:1256.26px;width:5px;height:5px;border-radius:50%;background:#8b98a6"></div>
<div class="a" style="left:989.200px;top:1264.36px;width:5px;height:5px;border-radius:50%;background:#8b98a6"></div>
<div class="a nm2" style="left:1018px;top:1237.46px;font-size:25.500px;letter-spacing:-0.032px">Terence Gonzalez</div>
<svg class="a" style="left:1325.8px;top:1244.76px" width="28" height="28" viewBox="0 0 28 28" ><circle cx="14" cy="14" r="12.400" fill="none" stroke="#8b97a5" stroke-width="2.600"/><path d="M14 9v10M9 14h10" stroke="#8b97a5" stroke-width="2.600"/></svg>
<div class="a st" style="left:1588px;top:1239.26px">Без статуса</div>
<svg class="a" style="left:1841.6px;top:1244.76px" width="28" height="28" viewBox="0 0 28 28" ><circle cx="14" cy="14" r="12.400" fill="none" stroke="#8b97a5" stroke-width="2.600"/><path d="M14 9v10M9 14h10" stroke="#8b97a5" stroke-width="2.600"/></svg>
<div class="a nm2" style="left:2102.500px;top:1237.46px;font-size:25.500px;letter-spacing:-.82px">17.11.2023 01:57</div>
<div class="a note" style="left:2346px;top:1233.76px"></div>
<svg class="a" style="left:2371.5px;top:1245.26px" width="27" height="27" viewBox="0 0 27 27" ><path d="M2.800 24.200l.3-5.200L18.600 3.500a1.800 1.800 0 0 1 2.500 0l2.400 2.400a1.800 1.800 0 0 1 0 2.500L8 23.900Z" fill="none" stroke="#fdf4d5" stroke-width="2.300" stroke-linejoin="round"/><path d="M17 5.200l4.800 4.800" stroke="#fdf4d5" stroke-width="2.100"/></svg>
<div class="a row" style="top:1305.33px"></div>
<div class="a cb off" style="left:758px;top:1335.83px"></div>
<div class="a start" style="left:838px;top:1327.33px"><svg class="a" style="left:5.600px;top:9.800px" width="22" height="25.800" viewBox="0 0 23 27" fill="#58d42d"><path d="M16.600 6.300c-2.100.100-3.700 1.300-4.700 1.300S9.300 6.400 7.600 6.400C4.400 6.500 1 9.200 1 14.600c0 3.300 1.300 6.800 2.900 9 1.300 1.900 2.500 3.400 4.200 3.400s2.400-1.100 4.500-1.100 2.500 1.100 4.300 1.100 3-1.700 4.100-3.300c1.300-1.900 1.800-3.700 1.900-3.800-.100 0-3.600-1.400-3.600-5.400 0-3.400 2.700-4.900 2.900-5-1.600-2.300-4-2.600-4.800-2.600ZM14.700 4.200C15.700 3 16.400 1.400 16.200 0c-1.400.100-3.100 1-4.100 2.200-.900 1-1.700 2.600-1.500 4.100 1.600.100 3.200-.800 4.100-2.100Z"/></svg><div class="a" style="left:44px;top:0;line-height:47px">Старт</div></div>
<div class="a" style="left:989.200px;top:1341.63px;width:5px;height:5px;border-radius:50%;background:#8b98a6"></div>
<div class="a" style="left:989.200px;top:1349.83px;width:5px;height:5px;border-radius:50%;background:#8b98a6"></div>
<div class="a" style="left:989.200px;top:1357.93px;width:5px;height:5px;border-radius:50%;background:#8b98a6"></div>
<div class="a nm2" style="left:1018px;top:1331.03px;font-size:25.500px;letter-spacing:0.271px">Steven Smith</div>
<svg class="a" style="left:1325.8px;top:1338.33px" width="28" height="28" viewBox="0 0 28 28" ><circle cx="14" cy="14" r="12.400" fill="none" stroke="#8b97a5" stroke-width="2.600"/><path d="M14 9v10M9 14h10" stroke="#8b97a5" stroke-width="2.600"/></svg>
<div class="a st" style="left:1588px;top:1332.83px">Без статуса</div>
<svg class="a" style="left:1841.6px;top:1338.33px" width="28" height="28" viewBox="0 0 28 28" ><circle cx="14" cy="14" r="12.400" fill="none" stroke="#8b97a5" stroke-width="2.600"/><path d="M14 9v10M9 14h10" stroke="#8b97a5" stroke-width="2.600"/></svg>
<div class="a nm2" style="left:2102.500px;top:1331.03px;font-size:25.500px;letter-spacing:-.82px">17.11.2023 01:57</div>
<div class="a note" style="left:2346px;top:1327.33px"></div>
<svg class="a" style="left:2371.5px;top:1338.83px" width="27" height="27" viewBox="0 0 27 27" ><path d="M2.800 24.200l.3-5.200L18.600 3.500a1.800 1.800 0 0 1 2.500 0l2.400 2.400a1.800 1.800 0 0 1 0 2.500L8 23.900Z" fill="none" stroke="#fdf4d5" stroke-width="2.300" stroke-linejoin="round"/><path d="M17 5.200l4.800 4.800" stroke="#fdf4d5" stroke-width="2.100"/></svg>
<div class="a hl" style="left:717.200px;top:454px;width:111px;height:293px"></div>
<div class="a" style="left:2772px;top:442px;width:6px;height:960px;border-radius:3px 3px 0 0;background:#1c2431"></div>
<div class="a" style="left:2772px;top:442.500px;width:6.100px;height:875.500px;border-radius:3px;background:#a7acb2"></div>
<div class="a bbar"></div>
<svg class="a" style="left:712px;top:1430px" width="50" height="50" viewBox="712 1430 50 50" ><g fill="none" stroke="#c3ccd6" stroke-width="3.9" stroke-linejoin="round" stroke-linecap="round"><path d="M740.600 1440H752.400V1452.400L736.600 1468.200Q734.900 1469.900 733.200 1468.200L723.800 1458.800Q722.100 1457.100 723.800 1455.400Z"/><circle cx="745.300" cy="1447" r="1.900" fill="#c3ccd6" stroke="none"/></g></svg>
<svg class="a" style="left:785px;top:1430px" width="50" height="50" viewBox="785 1430 50 50" ><g fill="none" stroke="#c3ccd6" stroke-width="3.9" stroke-linejoin="round" stroke-linecap="round"><rect x="795.100" y="1441.300" width="28.900" height="28.400" rx="4"/><path d="M795.500 1448.200H823.600"/><path d="M809.500 1452.600l7.200 7h-4.700v4.900h-5v-4.900h-4.700Z" fill="#c3ccd6" stroke="none"/></g></svg>
<svg class="a" style="left:857px;top:1430px" width="50" height="50" viewBox="857 1430 50 50" ><g fill="none" stroke="#c3ccd6" stroke-width="3.9" stroke-linejoin="round" stroke-linecap="round"><path d="M882 1439.900A15.800 15.800 0 1 0 897.400 1456.600a5 5 0 0 1-5.400-4.200 5.200 5.200 0 0 1-5.400-6 5 5 0 0 1-4.600-6.500Z"/><g fill="#c3ccd6" stroke="none"><circle cx="875.400" cy="1449.200" r="2.600"/><circle cx="882.500" cy="1454.800" r="2.400"/><circle cx="873.300" cy="1456.900" r="2.400"/><circle cx="878.700" cy="1463.500" r="2.600"/><circle cx="887.800" cy="1462.300" r="2.400"/></g></g></svg>
<svg class="a" style="left:929px;top:1430px" width="50" height="50" viewBox="929 1430 50 50" ><g fill="none" stroke="#c3ccd6" stroke-width="3.9" stroke-linejoin="round" stroke-linecap="round"><rect x="937.500" y="1465" width="32.700" height="6.400" rx="1.200"/><circle cx="938.900" cy="1444.600" r="2.800" stroke-width="3.300"/><path d="M942.300 1444L958.500 1446.500M940.600 1448.200L948.800 1464M958.500 1446.500Q963 1445.500 964.300 1439.800H971.500M958.500 1446.500Q963 1447 964.300 1450.300H971.500"/></g></svg>
<svg class="a" style="left:1000px;top:1430px" width="50" height="50" viewBox="1000 1430 50 50" ><g fill="none" stroke="#c3ccd6" stroke-width="3.9" stroke-linejoin="round" stroke-linecap="round"><path d="M1019.200 1461.500H1013.500a7.400 7.400 0 0 1-1.500-14.600A11.600 11.600 0 0 1 1034.600 1446"/><path d="M1028.600 1456.300A8 8 0 1 1 1027.400 1463.800"/><path d="M1023.800 1451.900V1458.600H1030.500"/></g></svg>
<svg class="a" style="left:1072px;top:1430px" width="50" height="50" viewBox="1072 1430 50 50" ><g fill="none" stroke="#c3ccd6" stroke-width="3.9" stroke-linejoin="round" stroke-linecap="round"><path d="M1093 1463.100H1086a7.300 7.300 0 0 1-1.500-14.400A11.600 11.600 0 0 1 1106.800 1449.600"/><path d="M1097.600 1469.900L1110.700 1456.800"/><path d="M1113.300 1454.200l.5-.5"/></g></svg>
<svg class="a" style="left:1145px;top:1430px" width="50" height="50" viewBox="1145 1430 50 50" ><g fill="none" stroke="#c3ccd6" stroke-width="4" stroke-linejoin="round" stroke-linecap="round"><path d="M1159.400 1442.800L1177.600 1454 1159.400 1465.200Z"/></g></svg>
<svg class="a" style="left:1215px;top:1430px" width="50" height="50" viewBox="1215 1430 50 50" ><g fill="none" stroke="#c3ccd6" stroke-width="3.7" stroke-linejoin="round" stroke-linecap="round"><rect x="1229" y="1441.900" width="7.400" height="24.100" rx=".5"/><rect x="1243.400" y="1441.900" width="7.400" height="24.100" rx=".5"/></g></svg>
<svg class="a" style="left:1288px;top:1430px" width="50" height="50" viewBox="1288 1430 50 50" ><g fill="none" stroke="#c3ccd6" stroke-width="3.9" stroke-linejoin="round" stroke-linecap="round"><path d="M1297.800 1447.400H1328.100M1301.400 1447.400V1466.600a4.500 4.500 0 0 0 4.500 4.500h14.400a4.500 4.500 0 0 0 4.500-4.500V1447.400M1308.700 1447V1443a2.300 2.300 0 0 1 2.300-2.300h4.200a2.300 2.300 0 0 1 2.300 2.300v4M1308.200 1454.600v8.700M1318 1454.600v8.700" stroke-width="3.700"/></g></svg>
<div class="a c" style="left:1363px;top:1435px;width:43.200px;height:40px;border-radius:10px;background:#214039;color:#4ade80;font-weight:700;font-size:23px">3</div>
<div class="a hl" style="left:774px;top:1418px;width:69px;height:80px;border-radius:20px"></div>
<div class="a ft" style="left:2120px;top:1435px">Строк на странице:</div>
<div class="a ft" style="left:2377px;top:1432.500px;font-size:26.500px">25</div>
<svg class="a" style="left:2420px;top:1442px" width="28" height="18" viewBox="2420 1442 28 18" ><path d="M2425.200 1447.200l8.700 7.300 8.700-7.300" fill="none" stroke="#7f8c9a" stroke-width="3.200" stroke-linecap="round" stroke-linejoin="round"/></svg>
<div class="a ft" style="left:2506.800px;top:1435px;width:120px"><span style="letter-spacing:-3.300px">1–11</span><span class="a" style="left:42.500px;top:0;padding-left:8.500px">из</span> <span class="a" style="left:82px;top:0;letter-spacing:-3.300px">11</span></div>
<svg class="a" style="left:2676px;top:1440px" width="22" height="30" viewBox="2676 1440 22 30" ><path d="M2692 1446L2681.800 1455.100 2692 1464.200" fill="none" stroke="#6d7986" stroke-width="3.600" stroke-linecap="round" stroke-linejoin="round"/></svg>
<svg class="a" style="left:2756px;top:1440px" width="22" height="30" viewBox="2756 1440 22 30" ><path d="M2761.500 1446L2771.700 1455.100 2761.500 1464.200" fill="none" stroke="#6d7986" stroke-width="3.600" stroke-linecap="round" stroke-linejoin="round"/></svg>
</div></div>
</body></html>
